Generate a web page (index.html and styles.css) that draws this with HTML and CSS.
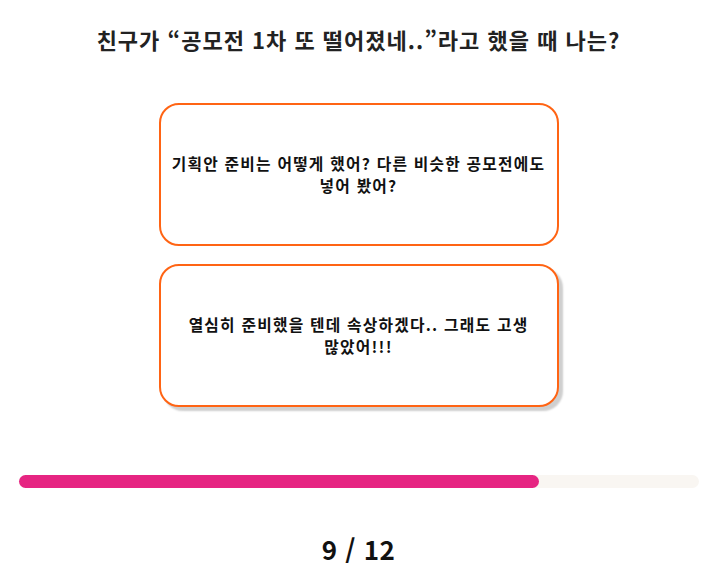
FILE: index.html
```html
<!DOCTYPE html>
<html lang="ko">
<head>
<meta charset="utf-8">
<link rel="stylesheet" href="styles.css">
</head>
<body>
<div class="page">
  <h1 class="question">친구가 “공모전 1차 또 떨어졌네..”라고 했을 때 나는?</h1>
  <div class="options">
    <button class="option">기획안 준비는 어떻게 했어? 다른 비슷한 공모전에도 넣어 봤어?</button>
    <button class="option option-hover">열심히 준비했을 텐데 속상하겠다.. 그래도 고생 많았어!!!</button>
  </div>
  <div class="progress">
    <div class="progress-fill" style="width: 76.6%"></div>
  </div>
  <div class="counter">9 / 12</div>
</div>
</body>
</html>
```

FILE: styles.css
```css
* { box-sizing: border-box; }
html, body { margin: 0; padding: 0; background: #fff; }
body {
  font-family: "Noto Sans CJK KR", "Noto Sans", sans-serif;
  color: #222;
}
.page {
  display: flex;
  flex-direction: column;
  align-items: center;
  padding-top: 22px;
}
.question {
  margin: 0;
  font-size: 22px;
  font-weight: 700;
  line-height: 34px;
  color: #222;
  letter-spacing: 1px;
}
.options {
  margin-top: 47px;
  display: flex;
  flex-direction: column;
  gap: 18px;
  width: 400px;
}
.option {
  height: 143px;
  width: 100%;
  background: #fff;
  border: 2px solid #ff6414;
  border-radius: 20px;
  font-family: inherit;
  font-size: 15.8px;
  font-weight: 700;
  color: #111;
  line-height: 22px;
  padding: 0 8px;
  text-align: center;
  letter-spacing: 1.2px;
  word-break: keep-all;
}
.option-hover {
  box-shadow: 4px 4px 2px #cfcfcf;
}
.progress {
  margin-top: 68px;
  width: 680px;
  height: 13px;
  background: #f9f6f2;
  border-radius: 7px;
  display: flex;
}
.progress-fill {
  background: #e62582;
  border-radius: 7px;
  height: 100%;
}
.counter {
  margin-top: 45px;
  font-size: 26px;
  font-weight: 700;
  color: #111;
  line-height: 32px;
  letter-spacing: 0.5px;
}
```
